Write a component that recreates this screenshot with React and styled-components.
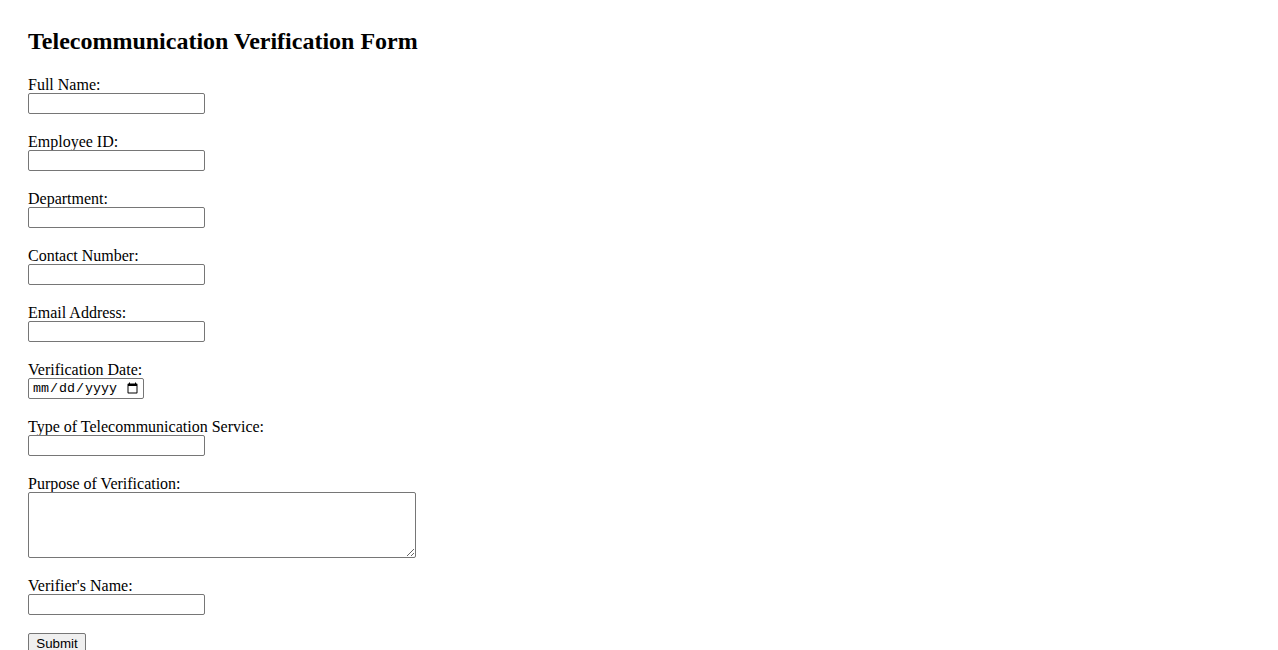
import React from "react";
import styled, { createGlobalStyle } from "styled-components";

const GlobalStyle = createGlobalStyle`
  html, body {
    margin: 0;
    padding: 0;
    background: #ffffff;
  }
  body {
    font-family: "Liberation Serif", "Times New Roman", serif;
    font-size: 16px;
    color: #000;
  }
`;

const Page = styled.div`
  padding: 28px;
`;

const Title = styled.h2`
  margin: 0 0 20px;
  font-family: "Liberation Serif", "Times New Roman", serif;
  font-size: 24px;
  font-weight: bold;
  line-height: 27px;
  color: #000;
`;

const Form = styled.form`
  display: flex;
  flex-direction: column;
  align-items: flex-start;
`;

const Field = styled.div`
  display: flex;
  flex-direction: column;
  align-items: flex-start;
  margin-bottom: ${(p) => p.$gap ?? 18}px;
`;

const Label = styled.label`
  display: block;
  box-sizing: border-box;
  height: 18px;
  padding-top: 1px;
  font-family: "Liberation Serif", "Times New Roman", serif;
  font-size: 16px;
  line-height: 18px;
  color: #000;
`;

const controlBase = `
  box-sizing: border-box;
  display: block;
  margin: 0;
  border: 1px solid #767676;
  border-radius: 2px;
  background: #fff;
  color: #000;
  outline: none;
`;

const TextInput = styled.input`
  ${controlBase}
  width: 177px;
  height: 21px;
  padding: 1px 2px;
  font-family: "Liberation Sans", Arial, sans-serif;
  font-size: 13.333px;
`;

const DateInput = styled.input`
  ${controlBase}
  width: 116px;
  height: 21px;
  padding: 1px 2px 1px 3px;
  font-family: "Liberation Mono", "Courier New", monospace;
  font-size: 13.333px;
`;

const TextArea = styled.textarea`
  ${controlBase}
  width: 388px;
  height: 66px;
  padding: 2px;
  font-family: "Liberation Mono", "Courier New", monospace;
  font-size: 13.333px;
  resize: both;
`;

const SubmitButton = styled.button`
  box-sizing: border-box;
  width: 58px;
  height: 21px;
  margin: 0;
  padding: 1px 6px;
  border: 1px solid #767676;
  border-radius: 2px;
  background: #efefef;
  color: #000;
  font-family: "Liberation Sans", Arial, sans-serif;
  font-size: 13.333px;
  line-height: 16px;
`;

const textFields = [
  { id: "fullName", label: "Full Name:" },
  { id: "employeeId", label: "Employee ID:" },
  { id: "department", label: "Department:" },
  { id: "contactNumber", label: "Contact Number:" },
  { id: "email", label: "Email Address:" },
];

export default function App() {
  return (
    <>
      <GlobalStyle />
      <Page>
        <Title>Telecommunication Verification Form</Title>
        <Form onSubmit={(e) => e.preventDefault()}>
          {textFields.map((f) => (
            <Field key={f.id}>
              <Label htmlFor={f.id}>{f.label}</Label>
              <TextInput id={f.id} type="text" />
            </Field>
          ))}
          <Field>
            <Label htmlFor="verificationDate">Verification Date:</Label>
            <DateInput id="verificationDate" type="date" />
          </Field>
          <Field>
            <Label htmlFor="serviceType">Type of Telecommunication Service:</Label>
            <TextInput id="serviceType" type="text" />
          </Field>
          <Field>
            <Label htmlFor="purpose">Purpose of Verification:</Label>
            <TextArea id="purpose" />
          </Field>
          <Field>
            <Label htmlFor="verifierName">Verifier's Name:</Label>
            <TextInput id="verifierName" type="text" />
          </Field>
          <SubmitButton type="submit">Submit</SubmitButton>
        </Form>
      </Page>
    </>
  );
}
